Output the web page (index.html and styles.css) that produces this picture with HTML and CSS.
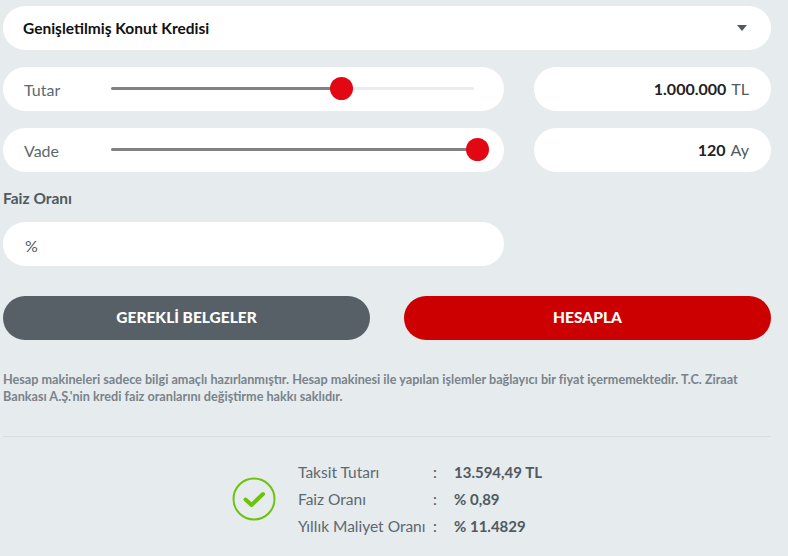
FILE: index.html
```html
<!DOCTYPE html>
<html lang="tr">
<head>
<meta charset="utf-8">
<title>Kredi Hesaplama</title>
<link rel="stylesheet" href="styles.css">
</head>
<body>
<main class="calc">
  <div class="pill select">
    <span class="select-text">Genişletilmiş Konut Kredisi</span>
    <span class="caret"></span>
  </div>
  <div class="row">
    <div class="pill slider-pill">
      <span class="slider-label">Tutar</span>
      <div class="track"><div class="fill fill-tutar"><span class="thumb"></span></div></div>
    </div>
    <div class="pill value-pill"><b class="num">1.000.000</b><span class="unit">TL</span></div>
  </div>
  <div class="row">
    <div class="pill slider-pill">
      <span class="slider-label">Vade</span>
      <div class="track"><div class="fill fill-vade"><span class="thumb"></span></div></div>
    </div>
    <div class="pill value-pill"><b class="num">120</b><span class="unit">Ay</span></div>
  </div>
  <div class="field-label">Faiz Oranı</div>
  <div class="row"><div class="pill rate-pill">%</div></div>
  <div class="buttons">
    <div class="btn btn-grey">GEREKLİ BELGELER</div>
    <div class="btn btn-red">HESAPLA</div>
  </div>
  <p class="note">Hesap makineleri sadece bilgi amaçlı hazırlanmıştır. Hesap makinesi ile yapılan işlemler bağlayıcı bir fiyat içermemektedir. T.C. Ziraat Bankası A.Ş.'nin kredi faiz oranlarını değiştirme hakkı saklıdır.</p>
  <hr class="divider">
  <section class="result">
    <svg class="check" width="44" height="44" viewBox="0 0 44 44" aria-hidden="true">
      <circle cx="22" cy="22" r="20.5" fill="none" stroke="#6cc30a" stroke-width="2"/>
      <path d="M13.5 22.5 L19.5 28 L31 17" fill="none" stroke="#6cc30a" stroke-width="4" stroke-linecap="round" stroke-linejoin="round"/>
    </svg>
    <dl class="grid">
      <dt>Taksit Tutarı</dt><dd class="colon">:</dd><dd class="val">13.594,49 TL</dd>
      <dt>Faiz Oranı</dt><dd class="colon">:</dd><dd class="val">% 0,89</dd>
      <dt>Yıllık Maliyet Oranı</dt><dd class="colon">:</dd><dd class="val">% 11.4829</dd>
    </dl>
  </section>
</main>
</body>
</html>
```
FILE: styles.css
```css
* { box-sizing: border-box; }
html, body { margin: 0; height: 100%; }
body {
  background: #e6ebee;
  font-family: "Lato", "Liberation Sans", sans-serif;
  color: #505a60;
  overflow: hidden;
}
.calc { width: 788px; padding: 6px 17px 0 3px; }
.pill {
  height: 44px;
  background: #fff;
  border-radius: 22px;
  display: flex;
  align-items: center;
}
.select {
  justify-content: space-between;
  padding: 0 24px 0 20px;
  margin-bottom: 17px;
}
.select-text { font-size: 15.5px; font-weight: 700; color: #111; }
.caret {
  width: 0; height: 0;
  border-left: 5px solid transparent;
  border-right: 5px solid transparent;
  border-top: 6px solid #505a60;
}
.row { display: flex; gap: 30px; margin-bottom: 17px; }
.slider-pill { width: 501px; padding: 0 30px 0 21px; }
.slider-label { flex: none; width: 87px; font-size: 16px; color: #5d6870; padding-top: 1px; }
.track {
  flex: none;
  width: 363px;
  height: 3px;
  margin-top: -1px;
  border-radius: 2px;
  background: #e9edef;
}
.fill { position: relative; height: 3px; background: #808285; border-radius: 2px; }
.fill-tutar { width: 230.5px; }
.fill-vade { width: 366.5px; }
.thumb {
  position: absolute;
  right: -11.5px;
  top: -10px;
  width: 23px;
  height: 23px;
  border-radius: 50%;
  background: #e30613;
}
.value-pill {
  width: 237px;
  justify-content: flex-end;
  padding: 0 22px 2px 0;
  font-size: 16px;
}
.num { font-weight: 700; color: #222; margin-right: 5px; }
.unit { color: #505a60; }
.field-label {
  font-size: 15.5px;
  font-weight: 700;
  line-height: 18px;
  color: #505a60;
  margin-top: 17px;
  margin-bottom: 15px;
}
.rate-pill { width: 501px; padding: 3px 0 0 22px; font-size: 16px; color: #505a60; }
.buttons { display: flex; gap: 34px; margin-top: 30px; }
.btn {
  flex: 1;
  height: 44px;
  border-radius: 22px;
  display: flex;
  align-items: center;
  justify-content: center;
  padding-bottom: 2px;
  color: #fff;
  font-size: 15.5px;
  font-weight: 900;
}
.btn-grey { background: #566066; }
.btn-red { background: #cc0000; }
.note {
  margin: 31px 0 0;
  font-size: 12.65px;
  font-weight: 700;
  line-height: 17px;
  color: #79838a;
}
.divider { border: 0; border-top: 1px solid #d8dee1; margin: 31px 0 0; }
.result {
  display: flex;
  align-items: center;
  margin: 21px 0 0 229px;
}
.check { flex: none; margin-right: 22px; margin-top: 1px; }
.grid {
  margin: 0;
  display: grid;
  grid-template-columns: 135px 21px auto;
  grid-auto-rows: 27px;
  align-items: center;
  font-size: 15.5px;
}
.grid dd { margin: 0; }
.grid dt { color: #5d6870; }
.colon { color: #505a60; }
.grid .val { font-size: 15px; font-weight: 700; color: #505a60; }
```
